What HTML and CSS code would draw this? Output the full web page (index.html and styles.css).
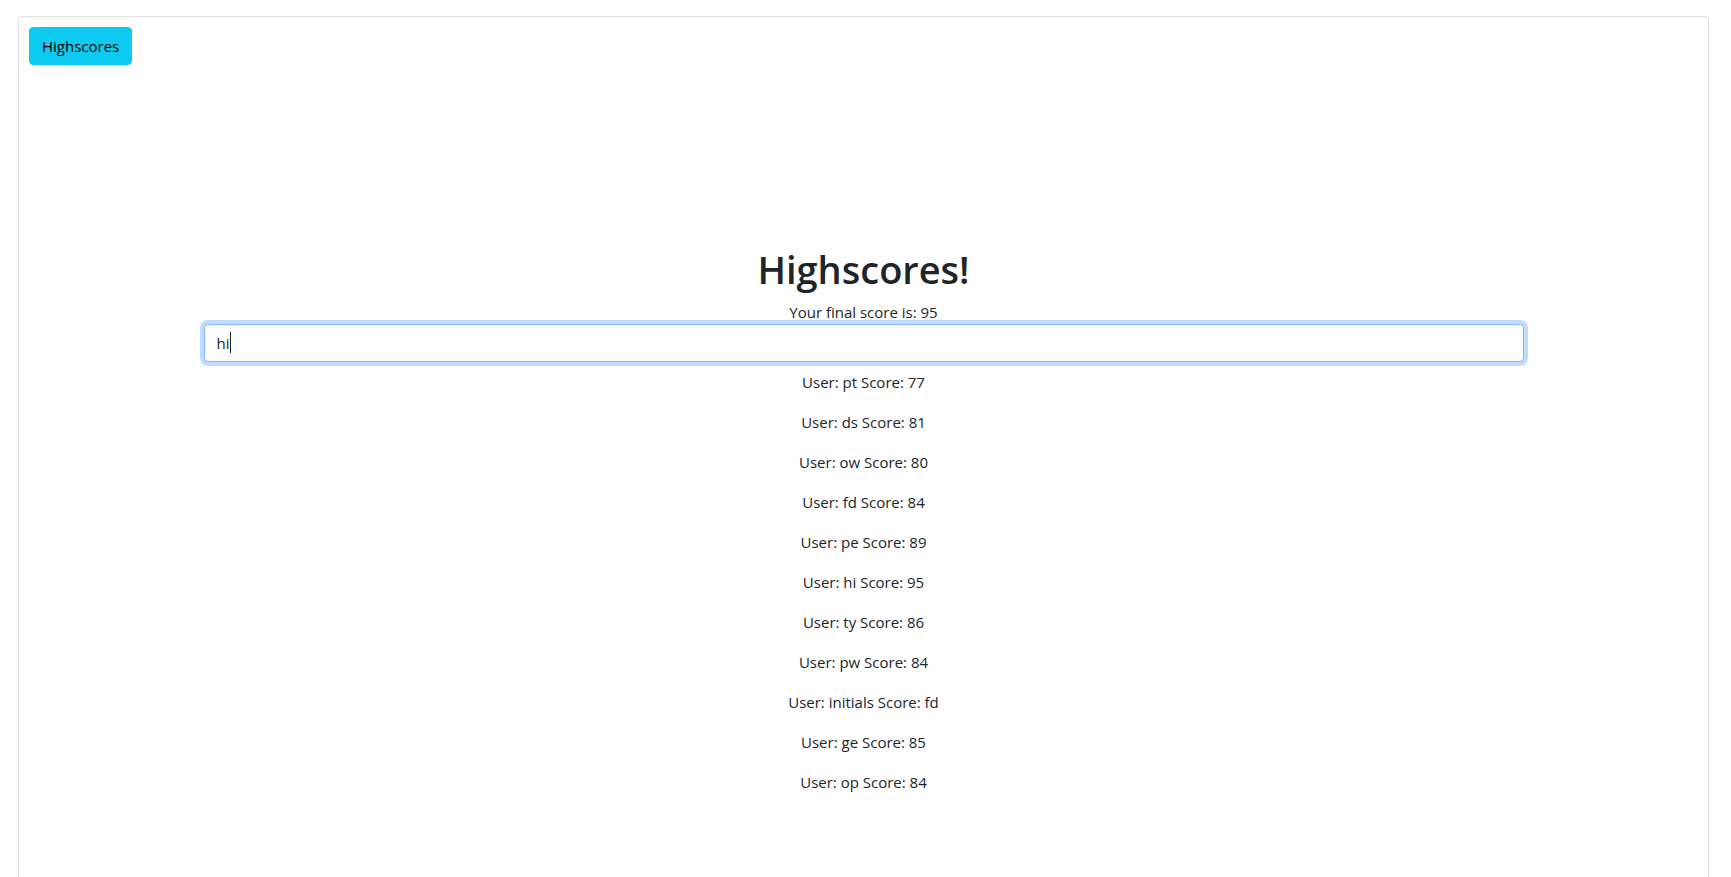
FILE: index.html
```html
<!DOCTYPE html>
<html lang="en">
<head>
<meta charset="utf-8">
<title>Highscores</title>
<link rel="stylesheet" href="styles.css">
</head>
<body>
<main class="card">
  <header class="card-bar">
    <button type="button" class="btn">Highscores</button>
  </header>
  <section class="container">
    <h1 class="title">Highscores!</h1>
    <label class="final" for="initials">Your final score is: 95</label>
    <div class="entry">
      <input class="field" id="initials" type="text" value="hi" autocomplete="off" spellcheck="false" autofocus>
      <span class="caret" aria-hidden="true"></span>
    </div>
    <div class="scores">
      <p class="score">User: pt Score: 77</p>
      <p class="score">User: ds Score: 81</p>
      <p class="score">User: ow Score: 80</p>
      <p class="score">User: fd Score: 84</p>
      <p class="score">User: pe Score: 89</p>
      <p class="score">User: hi Score: 95</p>
      <p class="score">User: ty Score: 86</p>
      <p class="score">User: pw Score: 84</p>
      <p class="score">User: initials Score: fd</p>
      <p class="score">User: ge Score: 85</p>
      <p class="score">User: op Score: 84</p>
    </div>
  </section>
</main>
</body>
</html>
```

FILE: styles.css
```css
*, *::before, *::after {
  box-sizing: border-box;
}

html {
  overflow: hidden;
}

body {
  margin: 0;
  padding: 16px 22px 0 18px;
  font: 400 15px/24px "Segoe UI", "Open Sans", "Noto Sans", sans-serif;
  color: #212529;
  background: #fff;
}

.card {
  display: flex;
  flex-direction: column;
  min-height: 100vh;
  padding: 10px;
  border: 1px solid #dfdfdf;
  border-radius: 4px;
}

.card-bar {
  display: flex;
}

.btn {
  padding: 6px 12px;
  border: 1px solid #0dcaf0;
  border-radius: 4px;
  background: #0dcaf0;
  color: #000;
  font: inherit;
  cursor: pointer;
}

.container {
  display: flex;
  flex-direction: column;
  width: 100%;
  max-width: 1320px;
  margin: 179px auto 0;
  text-align: center;
}

.title {
  margin: 0 0 6px;
  font-size: 38px;
  line-height: 50px;
  font-weight: 600;
}

.entry {
  display: flex;
  position: relative;
}

.field {
  width: 100%;
  height: 38px;
  padding: 6px 12px;
  border: 1px solid #86b7fe;
  border-radius: 4px;
  outline: 0;
  background: #fff;
  box-shadow: 0 0 0 4px rgba(13, 110, 253, 0.25);
  color: #212529;
  caret-color: transparent;
  font: inherit;
}

.caret {
  position: absolute;
  top: 8px;
  left: 26px;
  width: 1px;
  height: 21px;
  background: #212529;
  pointer-events: none;
}

.scores {
  padding-top: 8px;
}

.score {
  margin: 0 0 16px;
}
```
